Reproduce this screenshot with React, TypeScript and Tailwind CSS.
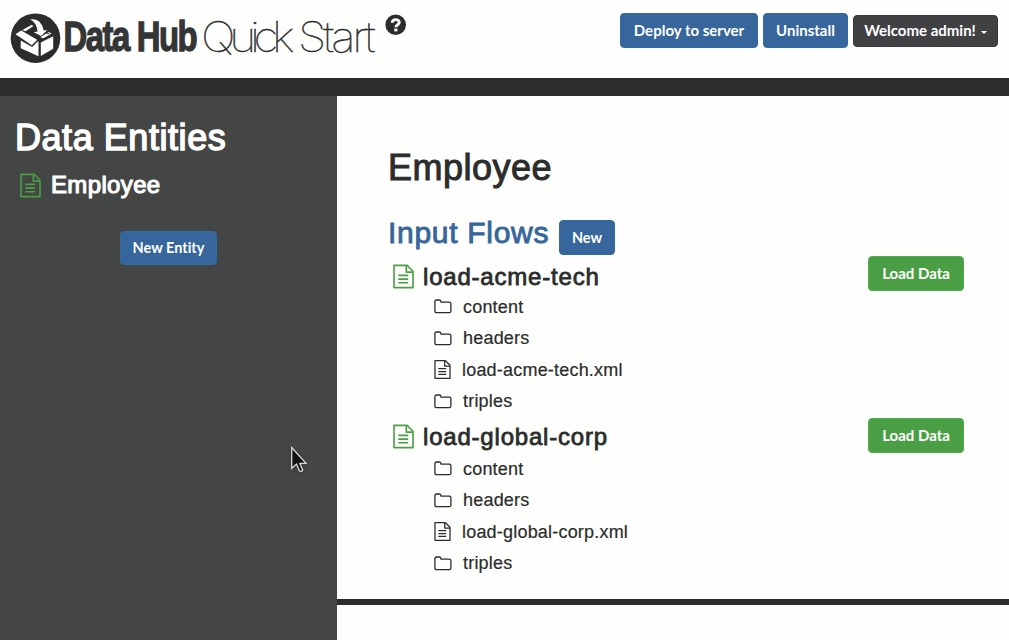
import type { ReactNode } from "react";

const HELV = "font-['Liberation_Sans',Arial,sans-serif]";

function FileIcon({ className }: { className: string }) {
  return (
    <svg viewBox="0 0 21 24" className={className} fill="none" stroke="currentColor" strokeWidth="1.6" strokeLinejoin="round">
      <path d="M1 .9H14.2L20 6.7V23.1H1Z" />
      <path d="M13.3 1V7.6H20" />
      <path d="M5.3 10.9H15.2M5.3 14.6H15.2M5.3 18.3H15.2" />
    </svg>
  );
}

function FolderIcon() {
  return (
    <svg viewBox="0 0 18 15" className="h-[15px] w-[18px]" fill="none" stroke="currentColor" strokeWidth="1.3" strokeLinejoin="round">
      <path d="M.9 2.7Q.9 1 2.6 1H5.3Q6.9 1 6.9 2.7V3.1H15.3Q16.9 3.1 16.9 4.8V12Q16.9 13.7 15.3 13.7H2.6Q.9 13.7 .9 12Z" />
    </svg>
  );
}

function Button({ className, children }: { className: string; children: ReactNode }) {
  return (
    <button
      className={`flex shrink-0 items-center justify-center whitespace-nowrap rounded-[4px] border font-['Lato',sans-serif] font-bold text-white [font-variant-ligatures:none] ${className}`}
    >
      {children}
    </button>
  );
}

const BLUE = "border-[#2e6da4] bg-[#36669b]";
const GREEN = "border-[#4cae4c] bg-[#4a9f45]";

function Logo() {
  return (
    <svg viewBox="0 0 420 78" className="h-[78px] w-[420px]" role="img">
      <circle cx="35.5" cy="38.2" r="24.8" fill="#2a2d2c" />
      <g fill="#fefefe">
        <path d="M15.5 34.3L21.2 30.6L37.2 39.8L31.8 45.2Z" />
        <path d="M22.3 30L32 24.7L33.2 26.3L25.5 31.2Z" />
        <path d="M20.7 40.6L32.2 46.9L37.9 41.3L38.5 41.6V56.2L20.7 48.2Z" />
        <path d="M40.8 42.5L53.2 36.2V48.8L40.8 55.9Z" />
        <path d="M30.3 19.4C37 18.5 42.3 22.2 43.6 30.5L47.3 30.1L41.1 36.1L33.8 32.2L37.5 31.6C37.2 25.8 34.8 21.8 30.3 19.4Z" />
        <path d="M46.2 33.6L49 32L51.6 33.8L43.2 38.3L40.4 37.2Z" />
      </g>
      <path d="M45.5 32.6L49.6 34" stroke="#2a2d2c" strokeWidth="1" />
      <text transform="translate(63.5 51) scale(0.765 1)" className="fill-[#333536] stroke-[#333536] stroke-[1.3px] font-['Liberation_Sans',sans-serif] text-[43px] font-bold tracking-[-1.9px]">
        Data Hub
      </text>
      <g transform="translate(201 51.5) scale(1.1 1)" className="fill-[#2a2d2c] stroke-[#2a2d2c] stroke-[0.4px] font-['Inter',sans-serif] text-[42px] font-thin">
        <text x="0" y="0" textLength="85" lengthAdjust="spacing">Quick</text>
        <text x="88.3" y="0" textLength="70.5" lengthAdjust="spacing">Start</text>
      </g>
      <circle cx="395.7" cy="24.7" r="10.3" fill="#2a2d2c" />
      <path d="M392.2 22.8C392.4 18.6 399.4 18.8 399.3 22.4C399.2 24.8 395.9 24.7 395.8 27.3" fill="none" stroke="#fefefe" strokeWidth="2.9" />
      <path d="M394.3 28.6H397.4V31.4H394.3Z" fill="#fefefe" />
    </svg>
  );
}

function Flow({ name, titleClass }: { name: string; titleClass: string }) {
  const items = ["content", "headers", `${name}.xml`, "triples"];
  return (
    <section className="h-[162px]">
      <div className="flex h-[35px] items-start pl-[5px]">
        <div className={`flex flex-1 items-center ${titleClass}`}>
          <FileIcon className="h-[25px] w-[21px] text-[#4a9f45]" />
          <h3 className="ml-[9px] mt-[1px] text-[24px] leading-[28px] tracking-[0.8px] [-webkit-text-stroke:0.8px_#2a2d2c]">{name}</h3>
        </div>
        <Button className={`h-[35px] w-[96px] text-[15px] ${GREEN}`}>Load Data</Button>
      </div>
      <ul>
        {items.map((item) => (
          <li key={item} className="flex h-[31.5px] items-center pl-[46px] text-[18px] leading-[22px] tracking-[0.2px] [-webkit-text-stroke:0.2px_#2a2d2c]">
            {item.endsWith(".xml") ? (
              <span className="flex w-[28px]"><FileIcon className="h-[19px] w-[17px]" /></span>
            ) : (
              <span className="flex w-[29px]"><FolderIcon /></span>
            )}
            {item}
          </li>
        ))}
      </ul>
    </section>
  );
}

export default function App() {
  return (
    <div className={`relative flex h-[640px] w-[1009px] flex-col overflow-hidden bg-[#fefefd] text-[#2a2d2c] ${HELV}`}>
      <header className="flex h-[78px] shrink-0 justify-between pr-[11px]">
        <Logo />
        <div className="mt-[13px] flex h-[35px] items-center gap-[5px] self-start">
          <Button className={`h-[35px] w-[138px] text-[15px] ${BLUE}`}>Deploy to server</Button>
          <Button className={`h-[35px] w-[85px] text-[15px] ${BLUE}`}>Uninstall</Button>
          <Button className="h-[32px] w-[145px] border-[#38383a] bg-[#414143] text-[15px]">
            Welcome admin!
            <span className="ml-[5px] mt-[3px] border-x-[3px] border-t-[3px] border-x-transparent border-t-white" />
          </Button>
        </div>
      </header>
      <div className="h-[18px] shrink-0 bg-[#2a2d2c]" />
      <div className="flex flex-1">
        <aside className="w-[337px] bg-[#444645] text-white">
          <h1 className="mt-[21px] pl-[15px] text-[36px] leading-[42px] tracking-[0.55px] [-webkit-text-stroke:1.4px_#fff]">Data Entities</h1>
          <div className="mt-[12px] flex h-[28px] items-center pl-[20px]">
            <FileIcon className="h-[25px] w-[21px] text-[#4a9f45]" />
            <span className="ml-[10px] text-[24px] leading-[28px] tracking-[0.35px] [-webkit-text-stroke:1.1px_#fff]">Employee</span>
          </div>
          <div className="mt-[32px] flex justify-center">
            <Button className={`h-[34px] w-[97px] text-[14.5px] ${BLUE}`}>New Entity</Button>
          </div>
        </aside>
        <main className="flex-1">
          <div className="h-[503px] pl-[51px] pr-[45px] pt-[51px]">
            <h1 className="text-[36px] leading-[42px] tracking-[0.5px] [-webkit-text-stroke:1px_#2a2d2c]">Employee</h1>
            <div className="mt-[27px] flex h-[40px]">
              <h2 className="w-[171px] text-[30px] leading-[34px] tracking-[0.7px] text-[#36669b] [-webkit-text-stroke:0.9px_#36669b]">Input Flows</h2>
              <Button className={`mt-[4px] h-[35px] w-[56px] text-[14.5px] ${BLUE}`}>New</Button>
            </div>
            <Flow name="load-acme-tech" titleClass="mt-[6px]" />
            <Flow name="load-global-corp" titleClass="mt-[4px]" />
          </div>
          <div className="h-[6px] bg-[#2a2d2c]" />
        </main>
      </div>
      <svg viewBox="0 0 18 28" className="absolute left-[290px] top-[446px] h-[28px] w-[18px] drop-shadow-sm">
        <path d="M1.7 1.5V22.3L6.5 18L9.4 24.8Q10.8 26.2 12.7 24.2L9.8 17.3H16Z" fill="#111" stroke="#d8d8d8" strokeWidth="1.3" />
      </svg>
    </div>
  );
}
